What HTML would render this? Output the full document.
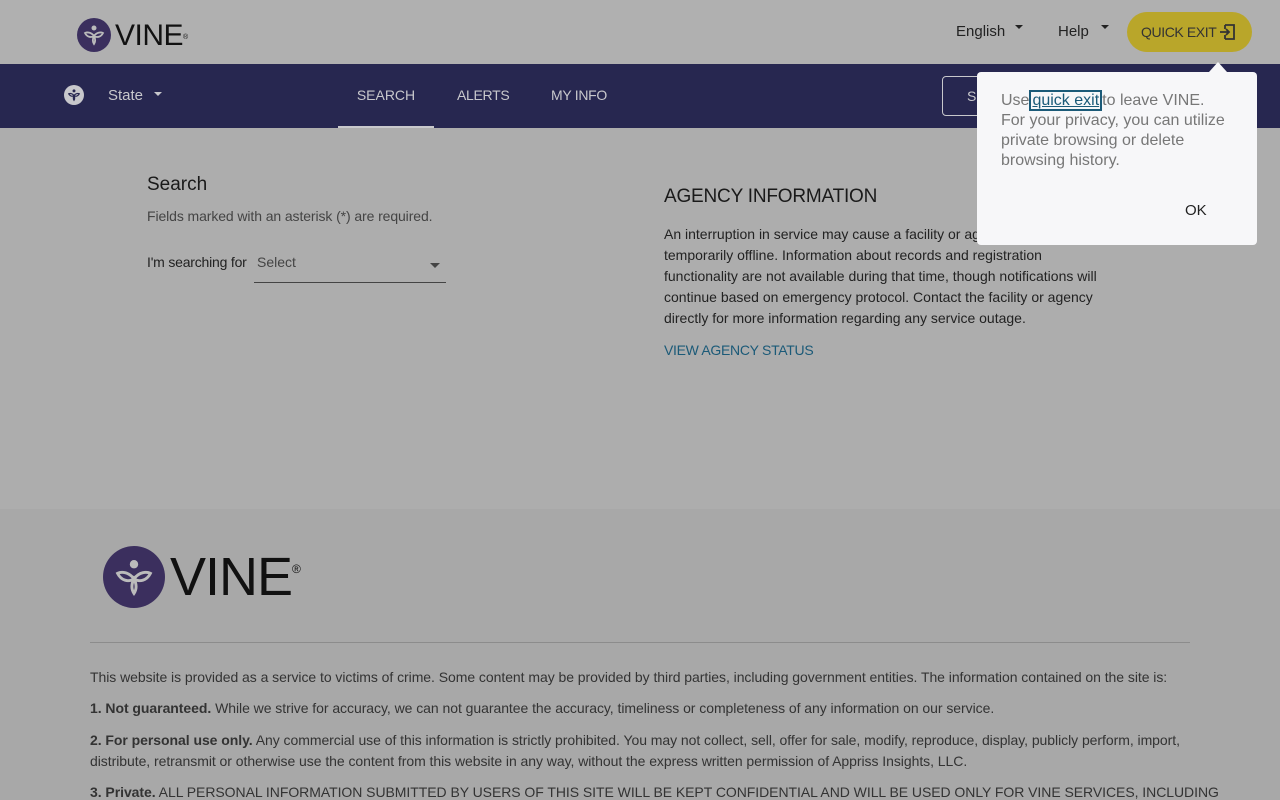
<!DOCTYPE html>
<html style="width:1280px;height:800px;overflow:hidden"><head><meta charset="utf-8"><style>
*{box-sizing:border-box;margin:0;padding:0}
body{width:1280px;height:800px;overflow:hidden;font-family:"Liberation Sans",Roboto,sans-serif;background:#adadad;color:#1a1a1a;position:relative}
.hdr{height:64px;background:#b0b0b0;position:relative}
.nav{height:64px;background:#272750;position:relative;color:#c8c8cc}
.main{height:381px;background:#adadad;position:relative}
.foot{height:291px;background:#a8a8a8;position:relative;overflow:hidden}
.abs{position:absolute}
.caret{display:inline-block;width:0;height:0;border-left:4px solid transparent;border-right:4px solid transparent;border-top:4px solid currentColor;vertical-align:middle}
p.f{font-size:14px;color:#333;line-height:21px;letter-spacing:-0.05px;white-space:nowrap}
</style></head><body>
<div class="hdr">
  <svg class="abs" style="left:77px;top:18px" width="34" height="34" viewBox="0 0 34 34"><circle cx="17" cy="17" r="17" fill="#3b2f5e"/><circle cx="17" cy="10" r="2.5" fill="#bbb"/><path d="M17 26c-2-3-1-6 0-8c1 2 2 5 0 8zM17 18c-3-4-7-4-9-3c2 4 6 5 9 3zM17 18c3-4 7-4 9-3c-2 4-6 5-9 3z" fill="none" stroke="#bbb" stroke-width="1.8"/></svg>
  <div class="abs" style="left:115px;top:19px;font-size:30px;color:#111;letter-spacing:-0.5px;line-height:34px">VINE<sup style="font-size:7px;vertical-align:top;position:relative;top:2px">®</sup></div>
  <div class="abs" style="left:956px;top:23px;font-size:15px;color:#222">English<span class="caret" style="margin-left:10px;margin-top:-10px"></span></div>
  <div class="abs" style="left:1058px;top:23px;font-size:15px;color:#222">Help<span class="caret" style="margin-left:12px;margin-top:-10px"></span></div>
  <div class="abs" style="left:1127px;top:12px;width:125px;height:40px;border-radius:20px;background:#b9a62a;font-size:14px;color:#333;line-height:40px;padding-left:14px;letter-spacing:-0.4px">QUICK EXIT
    <svg style="position:absolute;left:92px;top:12px" width="17" height="16" viewBox="0 0 17 16"><path d="M6 1h9v14H6M6 5V1M6 11v4M1 8h9M7 5l3 3-3 3" fill="none" stroke="#333" stroke-width="1.8"/></svg></div>
</div>
<div class="nav">
  <svg class="abs" style="left:64px;top:21px" width="20" height="20" viewBox="0 0 34 34"><circle cx="17" cy="17" r="17" fill="#c8c8cc"/><circle cx="17" cy="10" r="2.5" fill="#272750"/><path d="M17 26c-2-3-1-6 0-8c1 2 2 5 0 8zM17 18c-3-4-7-4-9-3c2 4 6 5 9 3zM17 18c3-4 7-4 9-3c-2 4-6 5-9 3z" fill="none" stroke="#272750" stroke-width="2"/></svg>
  <div class="abs" style="left:108px;top:23px;font-size:15px">State<span class="caret" style="margin-left:11px;margin-top:-4px"></span></div>
  <div class="abs" style="left:338px;top:0;width:96px;height:64px;border-bottom:2px solid #c8c8cc;text-align:center;line-height:62px;font-size:14px">SEARCH</div>
  <div class="abs" style="left:457px;top:23px;font-size:14px;letter-spacing:-0.3px">ALERTS</div>
  <div class="abs" style="left:551px;top:23px;font-size:14px;letter-spacing:-0.3px">MY INFO</div>
  <div class="abs" style="left:942px;top:12px;width:120px;height:40px;border:1px solid #c8c8cc;border-radius:4px;padding:11px 24px;font-size:14px">S</div>
</div>
<div class="main">
  <div class="abs" style="left:147px;top:46px;font-size:19px;color:#1a1a1a">Search</div>
  <div class="abs" style="left:147px;top:80px;font-size:14px;color:#444;letter-spacing:-0.1px">Fields marked with an asterisk (*) are required.</div>
  <div class="abs" style="left:147px;top:126px;font-size:14px;color:#222;letter-spacing:-0.2px">I'm searching for</div>
  <div class="abs" style="left:254px;top:118px;width:192px;height:37px;border-bottom:1px solid #444;font-size:14px;color:#444;padding:8px 3px">Select<span class="caret" style="position:absolute;right:6px;top:17px;border-width:5px 5px 0"></span></div>
  <div class="abs" style="left:664px;top:58px;font-size:19px;color:#1a1a1a;letter-spacing:-0.2px">AGENCY INFORMATION</div>
  <div class="abs" style="left:664px;top:96px;width:450px;font-size:14px;line-height:21px;color:#222">An interruption in service may cause a facility or agency to be temporarily offline. Information about records and registration functionality are not available during that time, though notifications will continue based on emergency protocol. Contact the facility or agency directly for more information regarding any service outage.</div>
  <div class="abs" style="left:664px;top:214px;font-size:14px;color:#1b5a78;letter-spacing:-0.3px">VIEW AGENCY STATUS</div>
</div>
<div class="foot">
  <svg class="abs" style="left:103px;top:37px" width="62" height="62" viewBox="0 0 34 34"><circle cx="17" cy="17" r="17" fill="#3b2f5e"/><circle cx="17" cy="10" r="2.3" fill="#bbb"/><path d="M17 26c-2-3-1-6 0-8c1 2 2 5 0 8zM17 18c-3-4-7-4-9-3c2 4 6 5 9 3zM17 18c3-4 7-4 9-3c-2 4-6 5-9 3z" fill="none" stroke="#bbb" stroke-width="1.6"/></svg>
  <div class="abs" style="left:170px;top:38px;font-size:54px;color:#111;letter-spacing:-1px;line-height:60px">VINE<sup style="font-size:12px;vertical-align:top;position:relative;top:-8px">®</sup></div>
  <div class="abs" style="left:90px;top:133px;width:1100px;border-top:1px solid #8c8c8c"></div>
  <div class="abs" style="left:90px;top:158px;width:1100px">
    <p class="f">This website is provided as a service to victims of crime. Some content may be provided by third parties, including government entities. The information contained on the site is:</p>
    <p class="f" style="margin-top:10px"><b>1. Not guaranteed.</b> While we strive for accuracy, we can not guarantee the accuracy, timeliness or completeness of any information on our service.</p>
    <p class="f" style="margin-top:11px"><b>2. For personal use only.</b> Any commercial use of this information is strictly prohibited. You may not collect, sell, offer for sale, modify, reproduce, display, publicly perform, import,<br>distribute, retransmit or otherwise use the content from this website in any way, without the express written permission of Appriss Insights, LLC.</p>
    <p class="f" style="margin-top:10px"><b>3. Private.</b> ALL PERSONAL INFORMATION SUBMITTED BY USERS OF THIS SITE WILL BE KEPT CONFIDENTIAL AND WILL BE USED ONLY FOR VINE SERVICES, INCLUDING</p>
  </div>
</div>
<div class="abs" style="left:1209px;top:62px;width:0;height:0;border-left:9px solid transparent;border-right:9px solid transparent;border-bottom:10px solid #f7f7f9"></div>
<div class="abs" style="left:977px;top:72px;width:280px;height:173px;background:#f7f7f9;border-radius:4px;padding:19px 24px;font-size:16px;line-height:20px;color:#777">
  Use<span style="border:2px solid #1b5a78;color:#1b5a78;text-decoration:underline;padding:0 1px">quick exit</span>to leave VINE.<br>For your privacy, you can utilize private browsing or delete browsing history.
  <div style="position:absolute;left:208px;top:129px;font-size:15px;color:#222">OK</div>
</div>
</body></html>
